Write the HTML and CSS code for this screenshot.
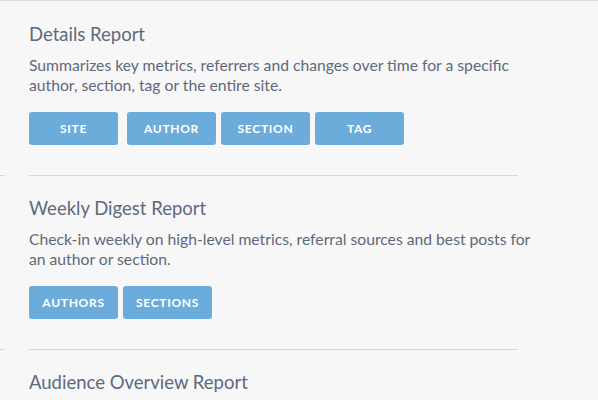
FILE: index.html
```html
<!DOCTYPE html>
<html>
<head>
<meta charset="utf-8">
<link rel="stylesheet" href="styles.css">
</head>
<body>
<main class="reports">
  <section class="report">
    <h2 class="report-title">Details Report</h2>
    <p class="report-desc">Summarizes key metrics, referrers and changes over time for a specific author, section, tag or the entire site.</p>
    <div class="actions">
      <button class="btn btn-first">Site</button>
      <button class="btn">Author</button>
      <button class="btn">Section</button>
      <button class="btn">Tag</button>
    </div>
  </section>
  <div class="divider"><span class="stub"></span><span class="rule"></span></div>
  <section class="report">
    <h2 class="report-title">Weekly Digest Report</h2>
    <p class="report-desc">Check-in weekly on high-level metrics, referral sources and best posts for an author or section.</p>
    <div class="actions">
      <button class="btn">Authors</button>
      <button class="btn">Sections</button>
    </div>
  </section>
  <div class="divider"><span class="stub"></span><span class="rule"></span></div>
  <section class="report">
    <h2 class="report-title">Audience Overview Report</h2>
  </section>
</main>
</body>
</html>
```
FILE: styles.css
```css
html, body {
  margin: 0;
  padding: 0;
}
body {
  background: #f7f7f7;
  border-top: 1px solid #dcdcdc;
  font-family: Lato, "Open Sans", sans-serif;
  color: #5e697c;
  overflow: hidden;
  height: 399px;
}
.reports {
  padding-top: 1px;
}
.report {
  padding: 20px 0 0 29px;
}
.report-title {
  margin: 0 0 9px;
  font-size: 18.5px;
  line-height: 24px;
  font-weight: 400;
}
.report-desc {
  margin: 0 0 17px;
  font-size: 15.7px;
  line-height: 20px;
  width: 502px;
}
.actions {
  display: flex;
  gap: 5px;
  margin-bottom: 30px;
}
.btn {
  min-width: 89px;
  height: 33px;
  padding: 0 12px;
  border: none;
  border-radius: 3px;
  background: #6cacdb;
  color: #fff;
  font-family: Lato, "Open Sans", sans-serif;
  font-size: 12px;
  font-weight: 700;
  letter-spacing: 0.7px;
  text-transform: uppercase;
}
.btn-first {
  margin-right: 4px;
}
.divider {
  display: flex;
  gap: 24px;
  height: 1px;
}
.stub {
  width: 5px;
  border-top: 1px solid #d8d8d8;
}
.rule {
  width: 489px;
  border-top: 1px solid #d8d8d8;
}
```
